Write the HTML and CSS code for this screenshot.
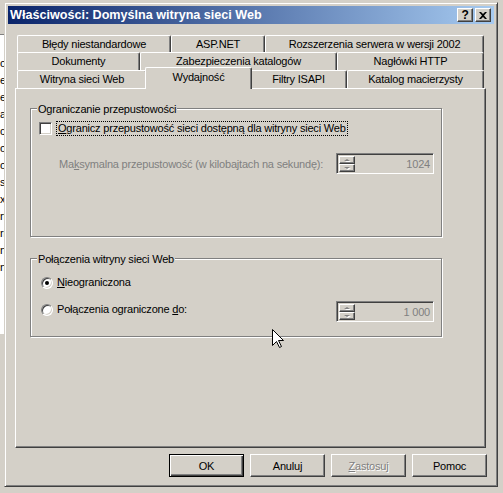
FILE: index.html
```html
<!DOCTYPE html>
<html lang="pl">
<head>
  <meta charset="UTF-8">
  <title>Właściwości: Domyślna witryna sieci Web</title>
  <link rel="stylesheet" href="styles.css">
</head>
<body>
  <!-- window behind the dialog -->
  <ul class="behind-list">
    <li>oi</li>
    <li>et</li>
    <li>es</li>
    <li>al</li>
    <li>cr</li>
    <li>o</li>
    <li>o'</li>
    <li>sc</li>
    <li>x</li>
    <li>rt</li>
    <li>rr</li>
    <li>nf</li>
    <li>n</li>
  </ul>

  <div class="dialog">
    <div class="titlebar">
      <span class="title">Właściwości: Domyślna witryna sieci Web</span>
      <span class="cap-btn help">?</span>
      <span class="cap-btn close">
        <svg width="8" height="7" viewBox="0 0 8 7"><path d="M0 0h2l2 2 2-2h2L5 3.5 8 7H6L4 5 2 7H0l3-3.5z" fill="#000"/></svg>
      </span>
    </div>

    <div class="content">
      <div class="tabs">
        <div class="tab-row row1">
          <div class="tab">Błędy niestandardowe</div>
          <div class="tab">ASP.NET</div>
          <div class="tab">Rozszerzenia serwera w wersji 2002</div>
        </div>
        <div class="tab-row row2">
          <div class="tab">Dokumenty</div>
          <div class="tab">Zabezpieczenia katalogów</div>
          <div class="tab">Nagłówki HTTP</div>
        </div>
        <div class="tab-row row3">
          <div class="tab">Witryna sieci Web</div>
          <div class="tab selected">Wydajność</div>
          <div class="tab">Filtry ISAPI</div>
          <div class="tab">Katalog macierzysty</div>
        </div>
      </div>

      <div class="panel">
        <div class="group bandwidth">
          <div class="group-title">Ograniczanie przepustowości</div>
          <div class="check-row">
            <span class="checkbox"></span>
            <span class="focus-label"><u>O</u>granicz przepustowość sieci dostępną dla witryny sieci Web</span>
          </div>
          <div class="field-row">
            <span class="disabled">Ma<u>k</u>symalna przepustowość (w kilobajtach na sekundę):</span>
            <div class="spinner">
              <div class="spin-btns">
                <span class="spin-btn"><i class="arrow up"></i></span>
                <span class="spin-btn"><i class="arrow down"></i></span>
              </div>
              <span class="spin-value">1024</span>
            </div>
          </div>
        </div>

        <div class="group connections">
          <div class="group-title">Połączenia witryny sieci Web</div>
          <div class="radio-row">
            <span class="radio checked"></span>
            <span class="radio-text"><u>N</u>ieograniczona</span>
          </div>
          <div class="radio-row limited">
            <span class="radio"></span>
            <span class="radio-text">Połączenia ograniczone <u>d</u>o:</span>
            <div class="spinner">
              <div class="spin-btns">
                <span class="spin-btn"><i class="arrow up"></i></span>
                <span class="spin-btn"><i class="arrow down"></i></span>
              </div>
              <span class="spin-value">1 000</span>
            </div>
          </div>
        </div>
      </div>

      <div class="buttons">
        <button class="btn default">OK</button>
        <button class="btn">Anuluj</button>
        <button class="btn" disabled><u>Z</u>astosuj</button>
        <button class="btn">Pomoc</button>
      </div>
    </div>
  </div>

  <svg class="cursor" width="13" height="20" viewBox="0 0 13 20">
    <path d="M0.5 0.5V16.5L4.5 12.5L7.5 18.5L9.5 17.5L6.5 11.5H11.5Z" fill="#fff" stroke="#000" stroke-width="1"/>
  </svg>
</body>
</html>
```

FILE: styles.css
```css
* {
  box-sizing: border-box;
}
body {
  margin: 0;
  width: 503px;
  height: 493px;
  position: relative;
  overflow: hidden;
  background-color: #d4d0c8;
  font-family: "Liberation Sans", Arial, sans-serif;
  font-size: 11px;
  letter-spacing: -0.2px;
  color: #000;
}

/* background window */
.behind-list {
  position: absolute;
  left: 0;
  top: 34px;
  width: 40px;
  height: 300px;
  margin: 0;
  padding: 20px 0 0 0;
  list-style: none;
  background-color: #fff;
  border-top: 1px solid #808080;
  line-height: 17px;
}

/* dialog window */
.dialog {
  position: absolute;
  left: 4px;
  top: 2px;
  width: 494px;
  height: 485px;
  padding: 3px;
  background-color: #d4d0c8;
  border: 1px solid;
  border-color: #d4d0c8 #404040 #404040 #d4d0c8;
  box-shadow: inset 1px 1px #fff, inset -1px -1px #808080;
}
.titlebar {
  height: 18px;
  display: flex;
  align-items: center;
  gap: 2px;
  padding: 0 3px 0 2px;
  background: linear-gradient(to right, #0a246a, #a6caf0);
}
.title {
  flex: 1;
  color: #fff;
  font-weight: bold;
  font-size: 12.6px;
  letter-spacing: 0;
  line-height: 18px;
  white-space: nowrap;
}
.cap-btn {
  width: 16px;
  height: 14px;
  display: flex;
  align-items: center;
  justify-content: center;
  background-color: #d4d0c8;
  border: 1px solid;
  border-color: #fff #404040 #404040 #fff;
  box-shadow: inset -1px -1px #808080;
  font-weight: bold;
  font-size: 12px;
  line-height: 12px;
}

.content {
  padding: 11px 8px 0 7px;
}

/* tabs */
.tabs {
  margin: 0 2px;
}
.tab-row {
  display: grid;
  height: 18px;
}
.row1 {
  height: 17px;
  grid-template-columns: 154px 94px 1fr;
}
.row2 {
  grid-template-columns: 123px 197px 1fr;
}
.row3 {
  grid-template-columns: 130px 103px 97px 1fr;
}
.tab {
  background-color: #d4d0c8;
  border-top: 1px solid #fff;
  border-left: 1px solid #fff;
  border-right: 1px solid #404040;
  border-radius: 2px 2px 0 0;
  box-shadow: inset -1px 0 #808080;
  text-align: center;
  line-height: 17px;
  white-space: nowrap;
}
.tab.selected {
  position: relative;
  z-index: 2;
  margin: -3px -2px -1px -2px;
  line-height: 18px;
}

.panel {
  height: 360px;
  padding: 19px 0 0 14px;
  border: 1px solid;
  border-color: #fff #404040 #404040 #fff;
  box-shadow: inset -1px -1px #808080;
}

/* group boxes */
.group {
  width: 412px;
  border: 1px solid #808080;
  box-shadow: inset 1px 1px #fff, 1px 1px #fff;
}
.bandwidth {
  height: 129px;
}
.connections {
  height: 79px;
  margin-top: 21px;
}
.group-title {
  width: fit-content;
  margin: -6px 0 0 6px;
  padding: 0 1px;
  background-color: #d4d0c8;
  line-height: 13px;
}

.check-row {
  display: flex;
  align-items: center;
  margin-top: 5px;
  padding-left: 8px;
}
.checkbox {
  width: 13px;
  height: 13px;
  background-color: #fff;
  border: 1px solid;
  border-color: #808080 #fff #fff #808080;
  box-shadow: inset 1px 1px #404040, inset -1px -1px #d4d0c8;
}
.focus-label {
  margin-left: 4px;
  padding: 0 1px;
  border: 1px dotted #000;
  line-height: 13px;
}

.field-row {
  display: flex;
  align-items: center;
  margin-top: 17px;
  padding: 0 7px 0 28px;
}
.disabled {
  color: #808080;
}

.spinner {
  width: 98px;
  height: 21px;
  margin-left: auto;
  display: flex;
  align-items: center;
  padding: 1px 2px 1px 1px;
  border: 1px solid;
  border-color: #808080 #fff #fff #808080;
  box-shadow: inset 1px 1px #404040, inset -1px -1px #d4d0c8;
}
.spin-btns {
  display: flex;
  flex-direction: column;
  margin-left: 1px;
}
.spin-btn {
  width: 16px;
  height: 8px;
  display: flex;
  align-items: center;
  justify-content: center;
  border: 1px solid;
  border-color: #fff #404040 #404040 #fff;
  box-shadow: inset -1px -1px #808080;
}
.arrow {
  width: 0;
  height: 0;
  border-left: 3px solid transparent;
  border-right: 3px solid transparent;
  filter: drop-shadow(1px 1px 0 #fff);
}
.arrow.up {
  border-bottom: 2px solid #808080;
}
.arrow.down {
  border-top: 2px solid #808080;
}
.spin-value {
  flex: 1;
  text-align: right;
  color: #808080;
  padding-right: 1px;
}

/* radio buttons */
.radio-row {
  display: flex;
  align-items: center;
  height: 13px;
  margin-top: 10px;
  padding: 0 7px 0 10px;
}
.radio-row.limited {
  height: 25px;
  margin-top: 8px;
}
.limited .spinner {
  margin-top: 4px;
}
.radio {
  width: 12px;
  height: 12px;
  position: relative;
  border-radius: 50%;
  background-color: #fff;
  border: 1px solid;
  border-color: #808080 #fff #fff #808080;
  box-shadow: inset 1px 1px #404040, inset -1px -1px #d4d0c8;
}
.radio.checked::after {
  content: "";
  position: absolute;
  left: 3px;
  top: 3px;
  width: 4px;
  height: 4px;
  border-radius: 50%;
  background-color: #000;
}
.radio-text {
  margin-left: 4px;
  line-height: 13px;
}

/* bottom buttons */
.buttons {
  display: flex;
  justify-content: flex-end;
  gap: 6px;
  margin: 6px -1px 0 0;
}
.btn {
  width: 75px;
  height: 23px;
  padding: 0;
  font-family: inherit;
  font-size: 11px;
  letter-spacing: -0.2px;
  color: #000;
  background-color: #d4d0c8;
  border: 1px solid;
  border-color: #fff #404040 #404040 #fff;
  box-shadow: inset -1px -1px #808080;
}
.btn.default {
  border-color: #000;
  box-shadow: inset 1px 1px #fff, inset -1px -1px #404040, inset -2px -2px #808080;
}
.btn:disabled {
  color: #808080;
  text-shadow: 1px 1px 0 #fff;
}

.cursor {
  position: absolute;
  left: 272px;
  top: 329px;
}
```
